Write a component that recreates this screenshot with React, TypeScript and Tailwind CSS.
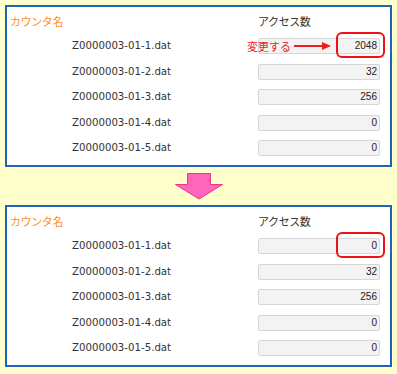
import React from "react";

const rowsTop = [2048, 32, 256, 0, 0];
const rowsBottom = [0, 32, 256, 0, 0];

function Panel({ values, first }: { values: number[]; first: boolean }) {
  return (
    <div className="border-2 border-[#1f63c0] bg-white pb-[9px]">
      <div className="flex pt-[6px] leading-[16px] text-[11px] tracking-[-0.4px] [font-family:'Noto_Sans_CJK_JP',sans-serif]">
        <div className="w-[251px] pl-[3px] text-[#ff8c2a]">カウンタ名</div>
        <div className="text-[#333333]">アクセス数</div>
      </div>
      <div className="mt-[9px] flex flex-col gap-[9.5px]">
        {values.map((v, i) => (
          <div key={i} className="relative flex h-4 items-center">
            <div className="w-[251px] pl-[65px] text-[10.2px] leading-[16px] text-[#333333] [font-family:'DejaVu_Sans',sans-serif]">
              Z0000003-01-{i + 1}.dat
            </div>
            <div className="h-4 w-[122px] rounded-[2px] border border-[#d6d6d6] bg-[#f3f3f3] pr-[2px] text-right text-[10px] leading-[14px] text-[#222222] [font-family:'Liberation_Sans',sans-serif]">
              {v}
            </div>
            {i === 0 && (
              <>
                {first && (
                  <>
                    <div className="absolute left-[240px] top-0 text-[11px] leading-[16px] text-[#ee1c1c] [font-family:'Noto_Sans_CJK_JP',sans-serif]">
                      変更する
                    </div>
                    <svg
                      className="absolute left-[287px] top-[4px]"
                      width="38"
                      height="8"
                      viewBox="0 0 38 8"
                    >
                      <rect x="0" y="3" width="30" height="2" fill="#ee1c1c" />
                      <polygon points="28,0 37,4 28,8" fill="#ee1c1c" />
                    </svg>
                  </>
                )}
                <div className="absolute left-[329px] top-[-6px] h-[26px] w-[49px] rounded-[6px] border-2 border-[#ee1111]" />
              </>
            )}
          </div>
        ))}
      </div>
    </div>
  );
}

export default function App() {
  return (
    <div className="h-[374px] w-[397px] bg-[#ffffcc] px-[5px] pt-[5px]">
      <Panel values={rowsTop} first={true} />
      <div className="flex h-[38px] justify-center pt-[6px]">
        <svg width="50" height="27" viewBox="0 0 50 27">
          <polygon
            points="13.5,0.5 36.5,0.5 36.5,11.5 48.5,11.5 25,26 1.5,11.5 13.5,11.5"
            fill="#ff66bb"
            stroke="#ee3388"
            strokeWidth="1"
          />
        </svg>
      </div>
      <Panel values={rowsBottom} first={false} />
    </div>
  );
}
